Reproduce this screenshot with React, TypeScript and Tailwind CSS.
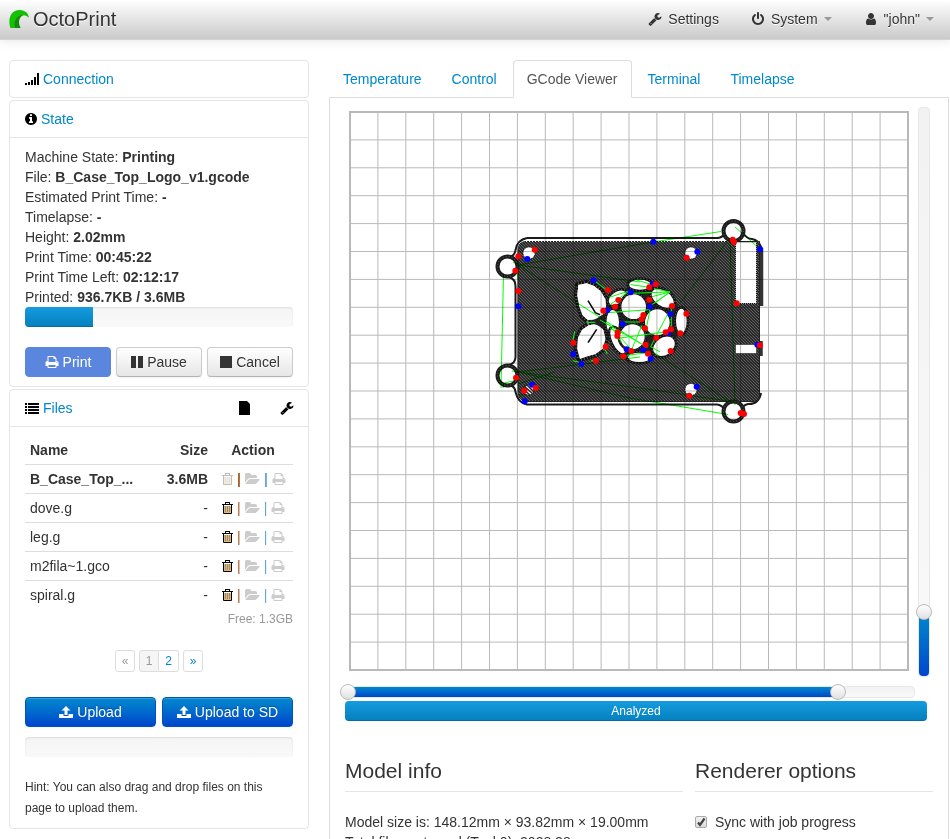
import React, { useState } from "react";

interface FileEntry {
  name: string;
  size: string;
  printing?: boolean;
}

const FILES: FileEntry[] = [
  { name: "B_Case_Top_...", size: "3.6MB", printing: true },
  { name: "dove.g", size: "-" },
  { name: "leg.g", size: "-" },
  { name: "m2fila~1.gco", size: "-" },
  { name: "spiral.g", size: "-" },
];

const STATE = [
  ["Machine State:", "Printing"],
  ["File:", "B_Case_Top_Logo_v1.gcode"],
  ["Estimated Print Time:", "-"],
  ["Timelapse:", "-"],
  ["Height:", "2.02mm"],
  ["Print Time:", "00:45:22"],
  ["Print Time Left:", "02:12:17"],
  ["Printed:", "936.7KB / 3.6MB"],
];

const TABS = ["Temperature", "Control", "GCode Viewer", "Terminal", "Timelapse"];

const ICONS = {
  wrench:
    "M448 1472q0-26-19-45t-45-19-45 19-19 45 19 45 45 19 45-19 19-45zm644-420l-682 682q-37 37-90 37-52 0-91-37l-106-108q-38-36-38-90 0-53 38-91l681-681q39 98 114.5 173.5t173.5 114.5zm634-435q0 39-23 106-47 134-164.5 217.5t-258.5 83.5q-185 0-316.5-131.5t-131.5-316.5 131.5-316.5 316.5-131.5q58 0 121.5 16.5t107.5 46.5q16 11 16 28t-16 28l-293 169v224l193 107q5-3 79-48.5t135.5-81 70.5-35.5q15 0 23.5 10t8.5 25z",
  power:
    "M1664 896q0 156-61 298t-164 245-245 164-298 61-298-61-245-164-164-245-61-298q0-182 80.5-343t226.5-270q43-32 95.5-25t83.5 50q32 42 24.5 94.5t-49.5 84.5q-98 74-151.5 181t-53.5 228q0 104 40.5 198.5t109.5 163.5 163.5 109.5 198.5 40.5 198.5-40.5 163.5-109.5 109.5-163.5 40.5-198.5q0-121-53.5-228t-151.5-181q-42-32-49.5-84.5t24.5-94.5q31-43 84-50t95 25q146 109 226.5 270t80.5 343zm-640-768v640q0 52-38 90t-90 38-90-38-38-90v-640q0-52 38-90t90-38 90 38 38 90z",
  user: "M1536 1399q0 109-62.5 187t-150.5 78h-854q-88 0-150.5-78t-62.5-187q0-85 8.5-160.5t31.5-152 58.5-131 94-89 134.5-34.5q131 128 313 128t313-128q76 0 134.5 34.5t94 89 58.5 131 31.5 152 8.5 160.5zm-256-887q0 159-112.5 271.5t-271.5 112.5-271.5-112.5-112.5-271.5 112.5-271.5 271.5-112.5 271.5 112.5 112.5 271.5z",
  print:
    "M448 1536h896v-256h-896v256zm0-640h896v-384h-160q-40 0-68-28t-28-68v-160h-640v640zm1152 64q0-26-19-45t-45-19-45 19-19 45 19 45 45 19 45-19 19-45zm128 0v416q0 13-9.5 22.5t-22.5 9.5h-224v160q0 40-28 68t-68 28h-960q-40 0-68-28t-28-68v-160h-224q-13 0-22.5-9.5t-9.5-22.5v-416q0-79 56.5-135.5t135.5-56.5h64v-544q0-40 28-68t68-28h672q40 0 88 20t76 48l152 152q28 28 48 76t20 88v256h64q79 0 135.5 56.5t56.5 135.5z",
  folder:
    "M1879 952q0 31-31 66l-336 396q-43 51-120.5 86.5t-143.5 35.5h-1088q-34 0-60.5-13t-26.5-43q0-31 31-66l336-396q43-51 120.5-86.5t143.5-35.5h1088q34 0 60.5 13t26.5 43zm-343-344v160h-832q-94 0-197 47.5t-164 119.5l-337 396-5 6q0-4-.5-12.5t-.5-12.5v-960q0-92 66-158t158-66h320q92 0 158 66t66 158v32h544q92 0 158 66t66 158z",
  info: "M1152 1376v-160q0-14-9-23t-23-9h-96v-512q0-14-9-23t-23-9h-320q-14 0-23 9t-9 23v160q0 14 9 23t23 9h96v320h-96q-14 0-23 9t-9 23v160q0 14 9 23t23 9h448q14 0 23-9t9-23zm-128-896v-160q0-14-9-23t-23-9h-192q-14 0-23 9t-9 23v160q0 14 9 23t23 9h192q14 0 23-9t9-23zm640 416q0 209-103 385.5t-279.5 279.5-385.5 103-385.5-103-279.5-279.5-103-385.5 103-385.5 279.5-279.5 385.5-103 385.5 103 279.5 279.5 103 385.5z",
};

function Icon({ name, className = "" }: { name: keyof typeof ICONS; className?: string }) {
  return (
    <svg viewBox="0 0 1792 1792" fill="currentColor" className={`w-[14px] h-[14px] flex-shrink-0 ${className}`}>
      <path d={ICONS[name]} />
    </svg>
  );
}

function SignalIcon() {
  return (
    <svg viewBox="0 0 14 12" className="w-[14px] h-3" shapeRendering="crispEdges">
      <path d="M0 10h2v2H0zM3 9h2v3H3zM6 7h2v5H6zM9 4h2v8H9zM12 0h2v12h-2z" />
    </svg>
  );
}

function ListIcon() {
  return (
    <svg viewBox="0 0 14 11" className="w-[14px] h-[11px]" shapeRendering="crispEdges">
      <path d="M0 0h2v2H0zM3 0h11v2H3zM0 3h2v2H0zM3 3h11v2H3zM0 6h2v2H0zM3 6h11v2H3zM0 9h2v2H0zM3 9h11v2H3z" />
    </svg>
  );
}

function TrashIcon() {
  return (
    <svg viewBox="0 0 11 12" className="w-[11px] h-3">
      <path d="M2 4h7v7H2z" fill="#f2b562" />
      <path d="M0 2h11v1H0zM3 2V0h5v2H7V1H4v1z" />
      <path d="M1.5 3v8.500h8V3" fill="none" stroke="#000" />
      <path d="M3.500 4v6M5.500 4v6M7.500 4v6" stroke="#7f9096" />
    </svg>
  );
}

function UploadIcon() {
  return (
    <svg viewBox="0 0 14 12" fill="currentColor" className="w-[14px] h-3">
      <path d="M7 0l4.500 4.500H8.500V9h-3V4.500h-3zM0 8h4.500v2h5V8H14v4H0z" />
    </svg>
  );
}

function Logo() {
  return (
    <svg viewBox="0 0 60 54" className="w-5 h-[18px]">
      <path d="M4 54C-4 28 4 0 32 0C49 0 59 11 60 24C50 13 36 14 29 24C22 34 24 46 28 54Z" fill="#13c100" />
      <path d="M44 15C30 14 20 24 17 38C16 45 17 50 19 54H35C27 40 28 22 44 15Z" fill="#128a0c" />
    </svg>
  );
}

function Caret() {
  return <span className="w-0 h-0 border-x-4 border-t-4 border-x-transparent border-t-[#999]" />;
}

const RED = "#f00";
const BLUE = "#00f";

// the plate is plotted in three pieces, each on a grid three times as fine as the bed
const LEFT_DOTS = {
  red: [[134, 119], [85, 139], [76, 182], [85, 243], [78, 503], [137, 534], [103, 542], [250, 398], [318, 452], [347, 410], [354, 240]],
  blue: [[112, 147], [85, 289], [126, 524], [104, 574], [250, 432], [274, 462], [311, 211]],
};
const RIGHT_DOTS = {
  red: [[170, 143], [312, 96], [308, 89], [320, 280], [178, 557], [342, 612], [332, 609]],
  blue: [[70, 95], [202, 125], [390, 118], [382, 404], [200, 530]],
};
const BERRY_DOTS = {
  red: [
    [175, 90], [165, 110], [130, 122], [268, 52], [268, 89], [250, 135], [245, 148], [255, 175], [336, 108], [379, 131],
    [333, 178], [361, 190], [317, 187], [289, 204], [257, 224], [264, 251], [214, 243], [190, 259], [172, 198], [173, 187],
    [332, 243], [287, 43],
  ],
  blue: [[212, 67], [278, 42], [270, 110], [142, 121], [188, 162], [331, 132], [324, 190], [200, 238], [250, 240], [272, 266]],
};

// cx, cy, rx, ry, rotation
const BERRIES = [
  [240, 44, 34, 16, 0],
  [308, 85, 38, 24, 35],
  [172, 83, 30, 18, -35],
  [158, 157, 20, 38, 0],
  [174, 212, 18, 42, -25],
  [238, 262, 35, 15, 0],
  [312, 229, 36, 27, -35],
  [364, 153, 17, 38, 0],
  [217, 200, 38, 38, 0],
  [221, 110, 38, 38, 0],
  [292, 157, 38, 40, 0],
];

function Dots({ dots }: { dots: { red: number[][]; blue: number[][] } }) {
  return (
    <>
      {dots.blue.map(([x, y]) => (
        <circle key={`b${x}-${y}`} cx={x} cy={y} r="9" fill={BLUE} />
      ))}
      {dots.red.map(([x, y]) => (
        <circle key={`r${x}-${y}`} cx={x} cy={y} r="9" fill={RED} />
      ))}
    </>
  );
}

function GcodeCanvas() {
  const lines = Array.from({ length: 19 }, (_, i) => 27.9 * (i + 1));
  const leaves =
    "M55 45L80 40L102 48L122 64L136 88L138 112L128 134L108 148L84 150L68 136L58 108L52 76Z" +
    "M86 166L110 162L130 180L136 206L128 236L106 252L84 258L60 266L52 236L54 204L66 180Z";
  const rings = [
    [507.5, 266.5],
    [507.5, 375.5],
    [733.5, 231],
    [733.5, 411.5],
  ];

  return (
    <svg viewBox="345 107 570 570" className="block flex-1 min-w-0 aspect-square">
      <defs>
        <pattern id="infill" width="3" height="3" patternUnits="userSpaceOnUse">
          <rect width="3" height="3" fill="#2c2c2c" />
          <path d="M0 0h1v1H0zM1 1h1v1H1zM2 2h1v1H2z" fill="#5c5c5c" />
        </pattern>
      </defs>

      {/* Brim and outer walls */}
      <g fill="none" stroke="#1a1a1a" strokeWidth="2">
        <path d="M527 238H717Q722 238 724 234M527 238Q517 240 515.500 250Q515 256 509 257M509 277Q515.500 279 515.500 286V357Q515.500 363 509 365M509 385Q515 386 515.500 392Q518 403 527 404.500H717Q722 405 725 410" />
        <path d="M743 233Q747 239 752 239Q759 240 762 249M761 393Q759 404 749 404Q745 404 742 408" />
      </g>
      <path d="M761.500 248V306M761 341V356" stroke="#333" strokeWidth="3.500" />
      <path d="M526 241.500H759.500V396Q759.500 401 753 401.500H526Q518 400 518 392V250Q518 242 526 241.500Z" fill="url(#infill)" stroke="#222" strokeWidth="1" />
      <path d="M526 241.500H735M524 402.500H740" fill="none" stroke="#e5e5e5" strokeWidth="1" strokeDasharray="1 2" />
      {rings.map(([cx, cy]) => (
        <g key={`${cx}-${cy}`}>
          <circle cx={cx} cy={cy} r="10" fill="#fff" stroke="#1c1c1c" strokeWidth="4" />
          <circle cx={cx} cy={cy} r="10" fill="none" stroke="#666" strokeWidth="1" strokeDasharray="1 2" />
        </g>
      ))}
      <g fill="#fff" stroke="#111" strokeWidth="1" strokeDasharray="1 1">
        <circle cx="529" cy="253" r="6" />
        <circle cx="529" cy="390" r="5" />
        <circle cx="691" cy="253" r="6" />
        <circle cx="691" cy="389.500" r="6" />
        <path d="M735.500 242H756.500V303.500H735.500zM735.500 344.500H756.500V353.500H735.500z" />
      </g>
      <path d="M524 386l9 8M526 384l8 8M523 389l7 6" stroke="#222" strokeWidth="1.500" />

      {/* Raspberry cut-out */}
      <g transform="translate(560 270) scale(.33333)">
        <path d={leaves} fill="#111" stroke="#111" strokeWidth="20" strokeLinejoin="round" />
        <path d={leaves} fill="#fff" stroke="#777" strokeWidth="16" strokeDasharray="2 7" />
        <path d={leaves} fill="#fff" />
        <path d="M84 92L106 128L120 134M84 218L110 178" fill="none" stroke="#111" strokeWidth="5" />
        <path d="M88 157L112 144L138 128L146 180L112 166Z" fill="#222" />
        <path d="M140 90L240 30L340 80L376 152L330 240L240 268L160 240L140 160Z" fill="#222" />
        {BERRIES.map(([cx, cy, rx, ry, rot]) => (
          <g key={`${cx}-${cy}`} transform={`rotate(${rot} ${cx} ${cy})`}>
            <ellipse cx={cx} cy={cy} rx={rx} ry={ry} fill="#fff" stroke="#111" strokeWidth="13" />
            <ellipse cx={cx} cy={cy} rx={rx + 3} ry={ry + 3} fill="none" stroke="#777" strokeWidth="3" strokeDasharray="3 6" />
            <ellipse cx={cx} cy={cy} rx={rx - 1} ry={ry - 1} fill="#fff" />
          </g>
        ))}
      </g>

      {/* Bed grid */}
      <g stroke="#b9b9b9" className="mix-blend-multiply" fill="none">
        {lines.map((d) => (
          <path key={d} d={`M${350 + d} 112V670M350 ${112 + d}H908`} />
        ))}
        <rect x="350" y="112" width="558" height="558" strokeWidth="2" />
      </g>

      {/* Travel moves */}
      <g stroke="#0f0" fill="none" className="mix-blend-multiply">
        <path d="M503.500 274L501 388M503 388L504 383L518 380" />
        <path d="M513 262L518 265L653 242L721 231.500M518 265L640 282M518 265L640 343M518 265V280" />
        <path d="M512 371L518 372L640 357M518 372L640 388L735 402M518 372L630 398L728 414.500M518 384L555 372M650 350L732 403" />
        <path d="M730 238L680 303M730 238L735 405M735 227L760 249M519 395H526" />
      </g>
      <g transform="translate(560 270) scale(.33333)" stroke="#0f0" strokeWidth="3" fill="none">
        <path d="M102 32L144 62M140 128L270 119M148 82L210 62L150 104M210 70L330 66L270 108M230 30L276 44M212 44L268 52M276 80L330 66L290 96M282 56L330 66" />
        <path d="M80 157H106M188 156H240M120 150L262 232M138 160L190 190L150 176M160 180L216 240M246 166L216 236M270 120L258 180M325 128L272 230M316 186L180 204" />
        <path d="M272 230L300 246M200 256L264 248M166 190L184 216M334 110V180M44 184L38 216M38 272L62 278M92 274L108 266M136 240L142 252" />
      </g>

      <g transform="translate(490 210) scale(.33333)">
        <Dots dots={LEFT_DOTS} />
      </g>
      <g transform="translate(630 210) scale(.33333)">
        <Dots dots={RIGHT_DOTS} />
        <circle cx="390" cy="406" r="9" fill={RED} />
      </g>
      <g transform="translate(560 270) scale(.33333)">
        <Dots dots={BERRY_DOTS} />
      </g>
    </svg>
  );
}

const TRACK = "rounded border border-[#e8e8e8] bg-linear-to-b from-[#f2f2f2] to-[#f9f9f9]";
const THUMB =
  "appearance-none bg-transparent pointer-events-none [&::-webkit-slider-thumb]:appearance-none [&::-webkit-slider-thumb]:pointer-events-auto [&::-webkit-slider-thumb]:w-4 [&::-webkit-slider-thumb]:h-4 [&::-webkit-slider-thumb]:rounded-full [&::-webkit-slider-thumb]:border [&::-webkit-slider-thumb]:border-[#bbb] [&::-webkit-slider-thumb]:bg-linear-to-b [&::-webkit-slider-thumb]:from-white [&::-webkit-slider-thumb]:to-[#e0e0e0]";

function LayerSlider() {
  const [layer, setLayer] = useState(64);

  return (
    <div className={`relative w-3 mr-[3px] ${TRACK}`}>
      <div
        className="absolute inset-x-0 bottom-0 rounded bg-linear-to-b from-[#0088cc] to-[#0044cc]"
        style={{ height: `${(layer / 570) * 100}%` }}
      />
      <input
        type="range"
        aria-label="Layer"
        min={0}
        max={570}
        value={layer}
        onChange={(e) => setLayer(Number(e.target.value))}
        className={`absolute -top-2 -left-[3px] w-4 h-[calc(100%+16px)] [writing-mode:vertical-lr] [direction:rtl] ${THUMB}`}
      />
    </div>
  );
}

function CommandSlider() {
  const [first, setFirst] = useState(2);
  const [last, setLast] = useState(494);

  return (
    <div className={`relative h-3 mr-[18px] mt-[9px] ${TRACK}`}>
      <div
        className="absolute inset-y-0 bg-linear-to-b from-[#0088cc] to-[#0044cc]"
        style={{ left: `${(first / 570) * 100}%`, right: `${100 - (last / 570) * 100}%` }}
      />
      <input
        type="range"
        aria-label="First command"
        min={0}
        max={570}
        value={first}
        onChange={(e) => setFirst(Number(e.target.value))}
        className={`absolute -left-2 -top-[3px] h-4 w-[calc(100%+16px)] ${THUMB}`}
      />
      <input
        type="range"
        aria-label="Last command"
        min={0}
        max={570}
        value={last}
        onChange={(e) => setLast(Number(e.target.value))}
        className={`absolute -left-2 -top-[3px] h-4 w-[calc(100%+16px)] ${THUMB}`}
      />
    </div>
  );
}

const BOX = "border border-[#e5e5e5] rounded";
const BTN =
  "flex-1 h-[30px] flex items-center justify-center gap-1 rounded border shadow-[inset_0_1px_0_rgba(255,255,255,0.2),0_1px_2px_rgba(0,0,0,0.05)]";
const BTN_DEFAULT = "border-[#ccc] border-b-[#b3b3b3] bg-linear-to-b from-white to-[#e6e6e6] [text-shadow:0_1px_1px_rgba(255,255,255,0.75)]";
const BTN_PRIMARY =
  "border-[#0055b3] bg-linear-to-b from-[#0088cc] to-[#0044cc] text-white [text-shadow:0_-1px_0_rgba(0,0,0,0.25)]";
const PROGRESS = "h-5 rounded overflow-hidden bg-linear-to-b from-[#f5f5f5] to-[#f9f9f9] shadow-[inset_0_1px_2px_rgba(0,0,0,0.1)]";
const BAR = "bg-linear-to-b from-[#149bdf] to-[#0480be] shadow-[inset_0_-1px_0_rgba(0,0,0,0.15)]";
const PAGE = "w-5 h-[22px] flex items-center justify-center border border-[#ddd] text-xs";

function Navbar() {
  return (
    <header className="h-10 flex items-center justify-between px-[9px] pb-[2px] border-b border-[#d4d4d4] bg-linear-to-b from-white to-[#cacaca] shadow-[0_1px_10px_rgba(0,0,0,0.1)] [text-shadow:0_1px_0_#fff]">
      <a href="#" className="flex items-center gap-1 text-xl leading-5">
        <Logo />
        OctoPrint
      </a>
      <nav className="flex items-center gap-8 pr-[7px]">
        <a href="#settings" className="flex items-center gap-[6px]">
          <Icon name="wrench" />
          Settings
        </a>
        <a href="#system" className="flex items-center gap-[6px]">
          <Icon name="power" />
          System
          <Caret />
        </a>
        <a href="#user" className="flex items-center gap-[6px]">
          <Icon name="user" />
          "john"
          <Caret />
        </a>
      </nav>
    </header>
  );
}

function Sidebar() {
  return (
    <aside className="w-[300px] flex-shrink-0 flex flex-col gap-[2px]">
      <section className={BOX}>
        <a href="#connection" className="flex items-center gap-1 px-[15px] py-2 text-[#08c]">
          <span className="text-black">
            <SignalIcon />
          </span>
          Connection
        </a>
      </section>

      {/* State */}
      <section className={BOX}>
        <a href="#state" className="flex items-center gap-[3px] px-[15px] py-2 border-b border-[#e5e5e5] text-[#08c]">
          <Icon name="info" className="text-black -ml-px" />
          State
        </a>
        <div className="px-[15px] py-[9px]">
          {STATE.map(([label, value]) => (
            <div key={label}>
              {label} <strong>{value}</strong>
            </div>
          ))}
          <div className={PROGRESS}>
            <div className={`h-full ${BAR}`} style={{ width: `${(936.7 / 3686.4) * 100}%` }} />
          </div>
          <div className="flex gap-[5px] mt-5">
            <button
              disabled
              className="flex-1 h-[30px] flex items-center justify-center gap-1 rounded border border-[#5a86dd] bg-[#5a86dd] text-white"
            >
              <Icon name="print" />
              Print
            </button>
            <button className={`${BTN} ${BTN_DEFAULT}`}>
              <svg viewBox="0 0 12 12" className="w-3 h-3" fill="#333">
                <path d="M0 0h5v12H0zM7 0h5v12H7z" />
              </svg>
              Pause
            </button>
            <button className={`${BTN} ${BTN_DEFAULT}`}>
              <svg viewBox="0 0 12 12" className="w-3 h-3" fill="#333">
                <path d="M0 0h12v12H0z" />
              </svg>
              Cancel
            </button>
          </div>
        </div>
      </section>

      {/* Files */}
      <section className={BOX}>
        <div className="flex items-center pl-[15px] pr-[14px] py-2 border-b border-[#e5e5e5] text-black">
          <a href="#files" className="flex items-center gap-1 flex-1">
            <ListIcon />
            <span className="text-[#08c]">Files</span>
          </a>
          <button aria-label="File list options" className="mr-[30px]">
            <svg viewBox="0 0 11 14" className="w-[11px] h-[14px]">
              <path d="M0 0h8l3 3v11H0z" />
            </svg>
          </button>
          <button aria-label="File settings">
            <Icon name="wrench" />
          </button>
        </div>
        <div className="px-[15px] py-[9px]">
          <table className="w-full table-fixed">
            <thead>
              <tr>
                <th className="p-[4px_5px] text-left">Name</th>
                <th className="p-[4px_5px] text-right w-[66px]">Size</th>
                <th className="p-[4px_5px] text-center w-[80px]">Action</th>
              </tr>
            </thead>
            <tbody>
              {FILES.map((file) => (
                <tr key={file.name} className={`border-t border-[#ddd] ${file.printing ? "font-bold" : ""}`}>
                  <td className="p-[4px_5px] whitespace-nowrap">{file.name}</td>
                  <td className="p-[4px_5px] text-right">{file.size}</td>
                  <td className="p-0">
                    <div className="flex items-center pl-[9px] text-[#a65b22]">
                      <button aria-label="Remove" className={`text-black mr-1 ${file.printing ? "opacity-25" : ""}`}>
                        <TrashIcon />
                      </button>
                      |
                      <button aria-label="Load" disabled className="text-[#ccc] mx-1">
                        <svg viewBox="0 0 1920 1792" fill="currentColor" className="w-[15px] h-[14px]">
                          <path d={ICONS.folder} />
                        </svg>
                      </button>
                      <span className="text-[#5fa9d8]">|</span>
                      <button aria-label="Load and print" disabled className="text-[#ccc] ml-1">
                        <Icon name="print" />
                      </button>
                    </div>
                  </td>
                </tr>
              ))}
            </tbody>
          </table>
          <div className="text-xs leading-5 text-right text-[#999]">Free: 1.3GB</div>

          <div className="flex justify-center gap-1 mt-[21px]">
            <button disabled className={`${PAGE} rounded-[3px] text-[#999]`}>
              «
            </button>
            <div className="flex">
              <button disabled className={`${PAGE} rounded-l-[3px] bg-[#f5f5f5] text-[#999]`}>
                1
              </button>
              <button className={`${PAGE} rounded-r-[3px] border-l-0 text-[#08c]`}>2</button>
            </div>
            <button className={`${PAGE} rounded-[3px] text-[#08c]`}>»</button>
          </div>

          <div className="flex gap-[6px] mt-[25px]">
            <button className={`${BTN} ${BTN_PRIMARY}`}>
              <UploadIcon />
              Upload
            </button>
            <button className={`${BTN} ${BTN_PRIMARY}`}>
              <UploadIcon />
              Upload to SD
            </button>
          </div>
          <div className={`${PROGRESS} mt-[10px]`} />
          <p className="mt-5 pr-5 text-xs leading-[21px]">Hint: You can also drag and drop files on this page to upload them.</p>
        </div>
      </section>
    </aside>
  );
}

function Viewer() {
  const [sync, setSync] = useState(true);

  return (
    <main className="flex-1 min-w-0">
      <nav className="flex gap-[2px]">
        {TABS.map((tab) => (
          <a
            key={tab}
            href="#tab"
            className={`relative -mb-px px-[13px] py-2 border rounded-t ${
              tab === "GCode Viewer" ? "border-[#ddd] border-b-white bg-white text-[#555]" : "border-transparent text-[#08c]"
            }`}
          >
            {tab}
          </a>
        ))}
      </nav>
      <div className="border border-b-0 border-[#ddd] px-[15px] py-[9px]">
        <div className="flex gap-[3px]">
          <GcodeCanvas />
          <LayerSlider />
        </div>
        <CommandSlider />
        <div className={`${BAR} h-5 mt-[3px] mr-[6px] rounded text-center text-xs leading-5 text-white`}>Analyzed</div>

        <div className="grid grid-cols-[1fr_238px] gap-3 mt-[30px]">
          <section>
            <h2 className="text-[21px] leading-10 border-b border-[#e5e5e5] mb-5">Model info</h2>
            <div className="whitespace-nowrap">Model size is: 148.12mm × 93.82mm × 19.00mm</div>
            <div className="whitespace-nowrap">Total filament used (Tool 0): 2028.28mm</div>
          </section>
          <section>
            <h2 className="text-[21px] leading-10 border-b border-[#e5e5e5] mb-5">Renderer options</h2>
            <label className="flex items-center gap-2">
              <span className="relative w-3 h-3">
                <input
                  type="checkbox"
                  checked={sync}
                  onChange={(e) => setSync(e.target.checked)}
                  className="block w-3 h-3 appearance-none border border-[#aaa] rounded-[2px] bg-linear-to-b from-[#f0f0f0] to-[#ddd]"
                />
                {sync && (
                  <svg viewBox="0 0 12 12" className="absolute inset-0 w-3 h-3 pointer-events-none">
                    <path d="M3 6.500L5 9L9.500 2.500" fill="none" stroke="#444" strokeWidth="2.200" />
                  </svg>
                )}
              </span>
              Sync with job progress
            </label>
          </section>
        </div>
      </div>
    </main>
  );
}

export default function App() {
  return (
    <div className="h-screen overflow-hidden bg-white text-[#333] text-sm leading-5 font-['Liberation_Sans',Arial,sans-serif]">
      <Navbar />
      <div className="flex gap-5 pt-5 pl-[9px] pr-px">
        <Sidebar />
        <Viewer />
      </div>
    </div>
  );
}
